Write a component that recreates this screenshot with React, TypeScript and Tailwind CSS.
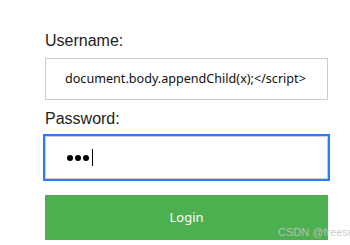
export default function App() {
  return (
    <div className="relative w-[350px] h-[245px] overflow-hidden bg-white">
      <form className="pl-[45px] pt-[32px] w-[328px]">
        <label className="block text-[16px] leading-[18px] text-[#222] font-['Liberation_Sans',Arial,sans-serif]">
          Username:
        </label>
        <div className="mt-[8px] h-[42px] w-[283px] border border-[#cccccc] flex items-center pl-[19px] font-['Noto_Sans',sans-serif] text-[12.6px] text-[#111]">
          document.body.appendChild(x);&lt;/script&gt;
        </div>

        <label className="block mt-[10px] text-[16px] leading-[18px] text-[#222] font-['Liberation_Sans',Arial,sans-serif]">
          Password:
        </label>
        <div className="mt-[8px] h-[43px] w-[283px] border border-[#cccccc] outline-2 outline-[#2f7bf5] flex items-center pl-[21px] gap-[2px]">
          <span className="w-[6px] h-[6px] rounded-full bg-black" />
          <span className="w-[6px] h-[6px] rounded-full bg-black" />
          <span className="w-[6px] h-[6px] rounded-full bg-black" />
          <span className="ml-[1px] w-px h-[17px] bg-black" />
        </div>

        <button
          type="button"
          className="mt-[16px] h-[45px] w-[283px] bg-[#4caf50] text-white text-[13px] font-['Noto_Sans',sans-serif] flex items-center justify-center"
        >
          Login
        </button>
      </form>

      <span className="absolute left-[278px] top-[226px] text-[11px] leading-[13px] whitespace-nowrap text-[#c4c4c4]/90 font-['Liberation_Sans',Arial,sans-serif]">
        CSDN @freesec
      </span>
    </div>
  );
}
